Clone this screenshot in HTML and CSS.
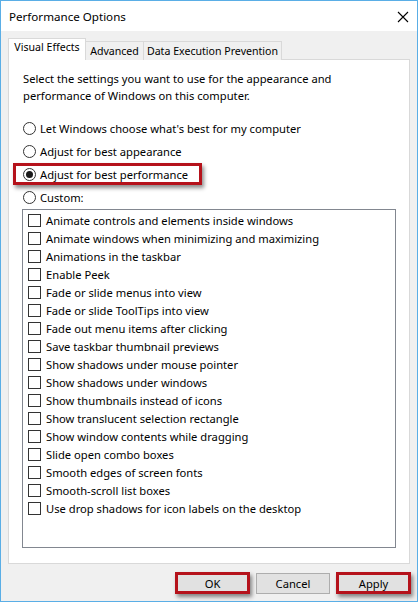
FILE: index.html
```html
<!DOCTYPE html>
<html lang="en">
<head>
  <meta charset="UTF-8">
  <title>Performance Options</title>
  <link rel="stylesheet" href="styles.css">
</head>
<body>
  <div class="window">
    <div class="titlebar">
      <span class="title">Performance Options</span>
      <svg class="close" width="12" height="12" viewBox="0 0 12 12">
        <path d="M1 1 L11 11 M11 1 L1 11" stroke="#000" stroke-width="1.1" fill="none"/>
      </svg>
    </div>

    <div class="content">
      <div class="tabs">
        <div class="tab active">Visual Effects</div>
        <div class="tab tab-adv">Advanced</div>
        <div class="tab tab-dep">Data Execution Prevention</div>
      </div>

      <div class="panel">
        <p class="intro">Select the settings you want to use for the appearance and performance of Windows on this computer.</p>

        <div class="radios">
          <label class="radio-row"><input type="radio" name="mode"> Let Windows choose what's best for my computer</label>
          <label class="radio-row"><input type="radio" name="mode"> Adjust for best appearance</label>
          <label class="radio-row"><span class="marked"><input type="radio" name="mode" checked> Adjust for best performance</span></label>
          <label class="radio-row"><input type="radio" name="mode"> Custom:</label>
        </div>

        <div class="listbox">
          <label class="check-row"><input type="checkbox"> Animate controls and elements inside windows</label>
          <label class="check-row"><input type="checkbox"> Animate windows when minimizing and maximizing</label>
          <label class="check-row"><input type="checkbox"> Animations in the taskbar</label>
          <label class="check-row"><input type="checkbox"> Enable Peek</label>
          <label class="check-row"><input type="checkbox"> Fade or slide menus into view</label>
          <label class="check-row"><input type="checkbox"> Fade or slide ToolTips into view</label>
          <label class="check-row"><input type="checkbox"> Fade out menu items after clicking</label>
          <label class="check-row"><input type="checkbox"> Save taskbar thumbnail previews</label>
          <label class="check-row"><input type="checkbox"> Show shadows under mouse pointer</label>
          <label class="check-row"><input type="checkbox"> Show shadows under windows</label>
          <label class="check-row"><input type="checkbox"> Show thumbnails instead of icons</label>
          <label class="check-row"><input type="checkbox"> Show translucent selection rectangle</label>
          <label class="check-row"><input type="checkbox"> Show window contents while dragging</label>
          <label class="check-row"><input type="checkbox"> Slide open combo boxes</label>
          <label class="check-row"><input type="checkbox"> Smooth edges of screen fonts</label>
          <label class="check-row"><input type="checkbox"> Smooth-scroll list boxes</label>
          <label class="check-row"><input type="checkbox"> Use drop shadows for icon labels on the desktop</label>
        </div>
      </div>

      <div class="buttons">
        <button class="btn marked-btn">OK</button>
        <button class="btn">Cancel</button>
        <button class="btn marked-btn">Apply</button>
      </div>
    </div>
  </div>
</body>
</html>
```

FILE: styles.css
```css
* {
  box-sizing: border-box;
}
body {
  margin: 0;
  background: #fff;
  font-family: "Noto Sans", "Liberation Sans", sans-serif;
  font-size: 11.2px;
  color: #000;
}
.window {
  width: 418px;
  height: 602px;
  border: 1px solid #5aaee6;
  background: #f0f0f0;
}
.titlebar {
  height: 30px;
  background: #fff;
  display: flex;
  align-items: center;
  justify-content: space-between;
  padding: 0 8px 0 8px;
}
.title {
  font-size: 11.6px;
}
.close {
  margin-top: 1px;
}
.content {
  padding: 7px 4px 0 7px;
}
.tabs {
  display: flex;
  align-items: flex-end;
  height: 22px;
  margin-bottom: -1px;
  position: relative;
  z-index: 1;
}
.tab {
  height: 19px;
  line-height: 18px;
  font-size: 10.6px;
  text-align: center;
  white-space: nowrap;
  border: 1px solid #d9d9d9;
  border-bottom: none;
  background: #f0f0f0;
  border-left: none;
}
.tab.active {
  width: 78px;
  height: 22px;
  line-height: 17px;
  background: #fff;
  border-left: 1px solid #d9d9d9;
}
.tab-adv {
  width: 58px;
}
.tab-dep {
  width: 138px;
}
.panel {
  width: 402px;
  height: 505px;
  background: #fff;
  border: 1px solid #d9d9d9;
  padding: 10px 0 0 14px;
}
.intro {
  margin: 0;
  width: 330px;
  line-height: 17px;
}
.radios {
  margin-top: 13px;
}
.radio-row {
  display: flex;
  align-items: center;
  height: 23px;
}
.marked {
  display: inline-flex;
  align-items: center;
  height: 23px;
  position: relative;
}
.marked::after {
  content: "";
  position: absolute;
  left: -10px;
  right: -14px;
  top: 0;
  bottom: 1px;
  border: 3px solid #b5121b;
  box-shadow: 2px 3px 4px rgba(0, 0, 0, 0.45);
}
input[type="radio"] {
  appearance: none;
  width: 13px;
  height: 13px;
  border: 1px solid #333;
  border-radius: 50%;
  margin: 0 4px 0 0;
  background: #fff;
  display: grid;
  place-content: center;
}
input[type="radio"]:checked::before {
  content: "";
  width: 7px;
  height: 7px;
  border-radius: 50%;
  background: #1a1a1a;
}
.listbox {
  width: 374px;
  height: 339px;
  border: 1px solid #828790;
  margin-left: -1px;
  padding-top: 1px;
}
.check-row {
  display: flex;
  align-items: center;
  height: 18px;
  padding-left: 5px;
}
input[type="checkbox"] {
  appearance: none;
  width: 13px;
  height: 13px;
  border: 1px solid #333;
  background: #fff;
  margin: 0 5px 0 0;
}
.buttons {
  display: flex;
  justify-content: flex-end;
  align-items: flex-start;
  gap: 6px;
  margin-top: 8px;
  padding-right: 2px;
}
.btn {
  width: 74px;
  height: 21px;
  margin-top: 1px;
  border: 1px solid #adadad;
  background: #e1e1e1;
  font-family: inherit;
  font-size: 11.2px;
  color: #000;
  padding: 0;
}
.marked-btn {
  width: 75px;
  border: 3px solid #b5121b;
  box-shadow: 2px 3px 4px rgba(0, 0, 0, 0.45);
  height: 22px;
  margin-top: 0;
}
```
